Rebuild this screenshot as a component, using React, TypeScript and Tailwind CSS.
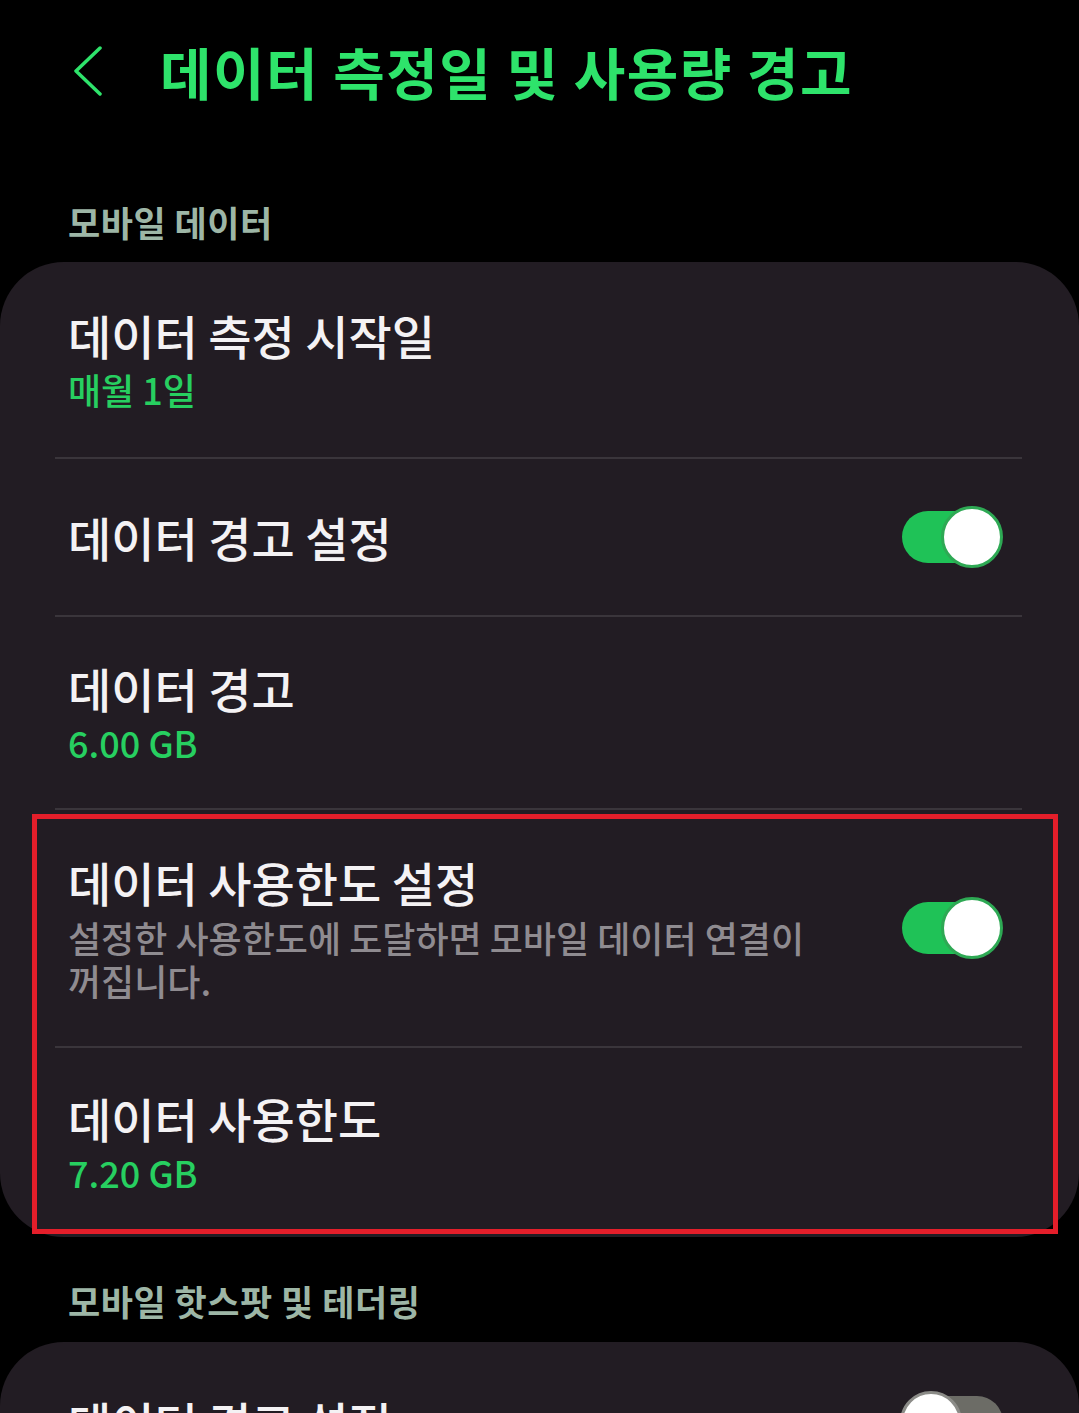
import type { ReactNode } from 'react'

const font = { fontFamily: '"Noto Sans CJK KR", "Noto Sans", sans-serif' }

function Toggle({ on }: { on: boolean }) {
    if (on) {
        return (
            <div className="relative w-[101px] h-[62px] shrink-0 flex items-center">
                <div className="w-[100px] h-[52px] rounded-full bg-[#1fc257]" />
                <div className="absolute right-0 top-0 w-[62px] h-[62px] rounded-full bg-white border-[3px] border-[#2ea954]" />
            </div>
        )
    }
    return (
        <div className="relative w-[103px] h-[62px] shrink-0 flex items-center justify-end">
            <div className="w-[92px] h-[52px] rounded-full bg-[#6c6c66]" />
            <div className="absolute left-0 top-0 w-[62px] h-[62px] rounded-full bg-white border-[3px] border-[#8c8c88]" />
        </div>
    )
}

function Row({ title, value, desc, toggle, height }: { title: string; value?: string; desc?: ReactNode; toggle?: boolean; height: string }) {
    return (
        <div className={`flex items-center justify-between pl-[68px] pr-[76px] ${height}`}>
            <div className="flex flex-col">
                <div className="text-[47px] leading-[56px] font-medium text-[#f4f2f4]">{title}</div>
                {value && <div className="mt-[2px] text-[36px] leading-[48px] font-medium text-[#27cf60]">{value}</div>}
                {desc && <div className="mt-[6px] text-[36px] leading-[43px] font-medium text-[#8f8b90] max-w-[780px] break-keep">{desc}</div>}
            </div>
            {toggle !== undefined && <Toggle on={toggle} />}
        </div>
    )
}

const Divider = () => <div className="ml-[55px] mr-[57px] h-[2px] bg-[#3a353b]" />

export default function App() {
    return (
        <div className="h-[1413px] bg-black overflow-hidden" style={font}>
            {/* header */}
            <div className="h-[142px] flex items-center pl-[72px]">
                <svg width="32" height="50" viewBox="0 0 32 50" fill="none" className="mr-[56px]">
                    <path d="M28 2 L4 25 L28 48" stroke="#2ee36b" strokeWidth="3.5" strokeLinecap="round" strokeLinejoin="round" />
                </svg>
                <h1 className="text-[56px] leading-[64px] font-bold tracking-[1.5px] text-[#2ee36b]">데이터 측정일 및 사용량 경고</h1>
            </div>

            <div className="pt-[60px] pb-[20px] pl-[68px] text-[35px] leading-[40px] font-bold tracking-[0.5px] text-[#9db6a6]">모바일 데이터</div>

            <div className="bg-[#221c23] rounded-[64px]">
                <Row title="데이터 측정 시작일" value="매월 1일" height="h-[195px]" />
                <Divider />
                <Row title="데이터 경고 설정" toggle={true} height="h-[156px]" />
                <Divider />
                <Row title="데이터 경고" value="6.00 GB" height="h-[191px]" />
                <Divider />
                <div className="relative">
                    <Row
                        title="데이터 사용한도 설정"
                        desc="설정한 사용한도에 도달하면 모바일 데이터 연결이 꺼집니다."
                        toggle={true}
                        height="h-[236px]"
                    />
                    <Divider />
                    <Row title="데이터 사용한도" value="7.20 GB" height="h-[189px]" />
                    {/* highlight box */}
                    <div className="absolute top-[4px] bottom-[3px] left-[32px] right-[21px] border-[5px] border-[#e41e2a]" />
                </div>
            </div>

            <div className="pt-[44px] pb-[21px] pl-[68px] text-[35px] leading-[40px] font-bold tracking-[0.5px] text-[#9db6a6]">모바일 핫스팟 및 테더링</div>

            <div className="bg-[#221c23] rounded-[64px]">
                <Row title="데이터 경고 설정" toggle={false} height="h-[160px]" />
            </div>
        </div>
    )
}
